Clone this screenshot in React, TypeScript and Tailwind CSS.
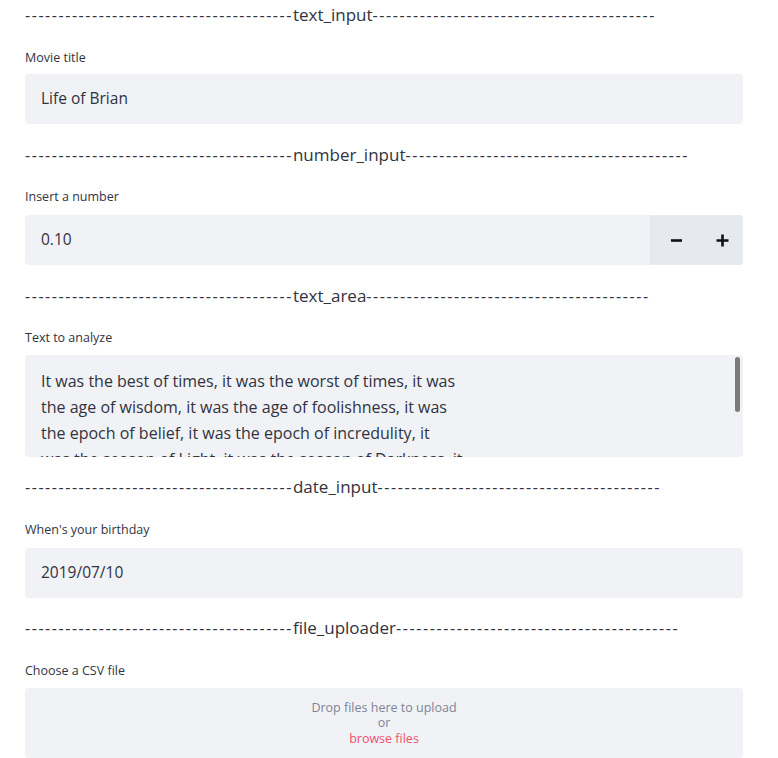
import React from "react";

const font = { fontFamily: '"Open Sans", "Noto Sans", sans-serif' };

function Divider({ name, mt }: { name: string; mt: string }) {
  return (
    <div className={`${mt} h-[30px] flex items-center text-[16px] text-[#31333f] whitespace-nowrap`}>
      <span className="tracking-[1.55px]">{"-".repeat(40)}</span>
      <span className="text-[17px]">{name}</span>
      <span className="tracking-[1.6px]">{"-".repeat(42)}</span>
    </div>
  );
}

function Label({ text, mt = "mt-[17px]" }: { text: string; mt?: string }) {
  return (
    <div className={`${mt} h-[20px] flex items-center text-[12.5px] text-[#31333f]`}>
      {text}
    </div>
  );
}

const lines = [
  "It was the best of times, it was the worst of times, it was",
  "the age of wisdom, it was the age of foolishness, it was",
  "the epoch of belief, it was the epoch of incredulity, it",
  "was the season of Light, it was the season of Darkness, it",
];

export default function App() {
  return (
    <div className="min-h-screen bg-white" style={font}>
      <div className="pl-[25px] w-[743px]">
        <Divider name="text_input" mt="mt-0" />
        <Label text="Movie title" mt="mt-[18px]" />
        <div className="mt-[6px] h-[50px] rounded bg-[#f0f2f6] flex items-center pl-4 text-[15.5px] text-[#31333f]">
          Life of Brian
        </div>

        <Divider name="number_input" mt="mt-[16px]" />
        <Label text="Insert a number" />
        <div className="mt-[8px] h-[50px] rounded bg-[#f0f2f6] flex text-[15.5px] text-[#31333f]">
          <div className="flex-1 flex items-center pl-4">0.10</div>
          <div className="w-[93px] flex bg-[#e6e9ef] rounded-r">
            <button className="w-[52px] flex items-center justify-center">
              <svg width="13" height="13" viewBox="0 0 13 13">
                <path d="M1 6.5h11" stroke="#0e1117" strokeWidth="2.6" />
              </svg>
            </button>
            <button className="w-[41px] flex items-center justify-center">
              <svg width="13" height="13" viewBox="0 0 13 13">
                <path d="M0.5 6.5h12M6.5 0.5v12" stroke="#0e1117" strokeWidth="2.6" />
              </svg>
            </button>
          </div>
        </div>

        <Divider name="text_area" mt="mt-[16px]" />
        <Label text="Text to analyze" />
        <div className="relative mt-[7px] h-[102px] rounded bg-[#f0f2f6] overflow-hidden pl-4 pt-[13px] text-[16px] leading-[26px] text-[#31333f]">
          {lines.map((l) => (
            <div key={l} className="whitespace-nowrap">
              {l}
            </div>
          ))}
          <div className="absolute right-[3px] top-[2px] w-[5px] h-[55px] rounded-full bg-[#7b7b7b]" />
        </div>

        <Divider name="date_input" mt="mt-[15px]" />
        <Label text="When's your birthday" mt="mt-[18px]" />
        <div className="mt-[8px] h-[50px] rounded bg-[#f0f2f6] flex items-center pl-4 text-[15.5px] text-[#31333f]">
          2019/07/10
        </div>

        <Divider name="file_uploader" mt="mt-[15px]" />
        <Label text="Choose a CSV file" mt="mt-[18px]" />
        <div className="mt-[7px] h-[70px] rounded bg-[#f0f2f6] flex flex-col items-center justify-center text-[12.5px] leading-[15.5px]">
          <span className="text-[#808495]">Drop files here to upload</span>
          <span className="text-[#808495]">or</span>
          <span className="text-[#f0506e]">browse files</span>
        </div>
      </div>
    </div>
  );
}
